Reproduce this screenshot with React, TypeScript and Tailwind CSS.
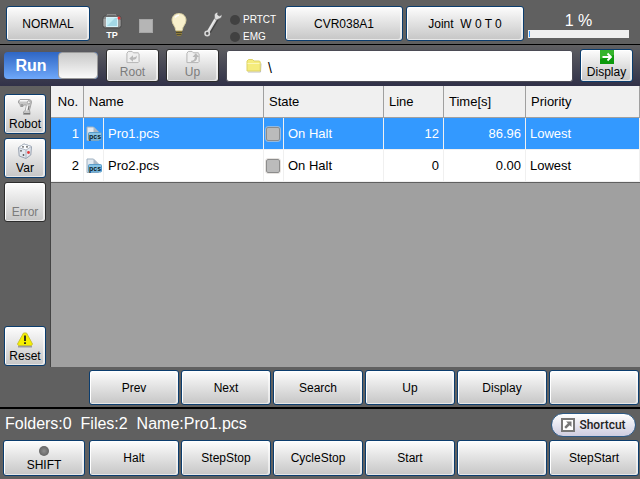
import type { ReactNode } from "react";

const font = "font-['Liberation_Sans',Arial,sans-serif]";

const face =
    "border rounded-[3px] bg-linear-to-b from-[#fdfdfd] to-[#c6c6c6] text-xs shadow-[inset_1px_1px_0_#ffffff,inset_-2px_-1px_0_#ffffff90]";

const programs = [
    { no: 1, name: "Pro1.pcs", state: "On Halt", line: "12", time: "86.96", priority: "Lowest", selected: true },
    { no: 2, name: "Pro2.pcs", state: "On Halt", line: "0", time: "0.00", priority: "Lowest", selected: false },
];

const fileKeys = ["Prev", "Next", "Search", "Up", "Display", ""];
const runKeys = ["Halt", "StepStop", "CycleStop", "Start", "", "StepStart"];

function Key({ children, className = "" }: { children?: ReactNode; className?: string }) {
    return (
        <button type="button" className={`${face} border-[#0b3d6e] text-black flex items-center justify-center ${className}`}>
            {children}
        </button>
    );
}

function IconKey({ icon, label, className = "", disabled = false }: { icon?: ReactNode; label: string; className?: string; disabled?: boolean }) {
    return (
        <button
            type="button"
            disabled={disabled}
            className={`${face} flex flex-col items-center justify-end gap-px leading-[14px] pb-[2px] ${disabled ? "border-[#2c2c2c] text-[#7c7c7c]" : "border-[#0b3d6e] text-black"} ${className}`}
        >
            {icon}
            <span>{label}</span>
        </button>
    );
}

function PendantIcon() {
    return (
        <svg width="20" height="16" viewBox="0 0 20 16">
            <path d="M5 2.5V1h9v1.5" fill="none" stroke="#b9b9b9" />
            <rect x="1" y="2" width="18" height="12" rx="2" fill="#8a8a8a" stroke="#4a4a4a" />
            <rect x="1.5" y="5" width="2.5" height="7" fill="#a5a5a5" />
            <rect x="16" y="6" width="2.5" height="6" fill="#999" />
            <rect x="4.5" y="3.5" width="11" height="9" fill="#a3d8e6" stroke="#d7f3fa" />
            <path d="M5 12V4h8z" fill="#c3edf5" />
            <circle cx="17" cy="4" r="1.5" fill="#e83030" />
        </svg>
    );
}

function BulbIcon() {
    return (
        <svg width="18" height="26" viewBox="0 0 18 26">
            <path d="M9 1.5c4.300 0 7 2.900 7 6.700 0 4.200-3.300 5.600-3.800 10.300H5.800C5.300 13.800 2 12.400 2 8.200 2 4.400 4.700 1.500 9 1.500z" fill="#f8f0cc" stroke="#d9cfa2" />
            <path d="M5 5.500c1-1.600 2.500-2.300 4-2.300" fill="none" stroke="#fff" strokeWidth="1.500" />
            <path d="M6 19h6v3.500L10.500 24h-3L6 22.500z" fill="#8f7d3c" />
            <path d="M6 20.500h6M6.500 22.500h5" stroke="#4f4a33" />
        </svg>
    );
}

function WrenchIcon() {
    return (
        <svg width="20" height="28" viewBox="0 0 20 28">
            <path d="M6 22.500L14 9" stroke="#444" strokeWidth="3.500" />
            <path d="M5 22L13 8.500" stroke="#d6d6d6" strokeWidth="2.800" />
            <path d="M5.500 20.500L12.500 8.500" stroke="#f3f3f3" />
            <circle cx="4.200" cy="23.500" r="2.200" fill="#555" stroke="#d6d6d6" strokeWidth="1.600" />
            <path d="M14.800 2.200c-2.600.3-4 2.300-3.300 4.300.3 1.200-.2 2-.2 2l2.600 1.500s.6-.9 1.700-1.100c2.200-.3 3.600-2 3.300-4.400L16.600 6l-2-1.100z" fill="#dedede" stroke="#555" strokeWidth=".5" />
        </svg>
    );
}

function FolderArrowIcon({ up = false }: { up?: boolean }) {
    return (
        <svg width="16" height="15" viewBox="0 0 16 15">
            <path d="M1.500 13.500V3.500L3 1.500h4L8.500 3h5l1 1v8.500l-1 1h-12z" fill="#efefef" stroke="#b0b0b0" />
            {up ? (
                <path d="M6 11.500c3 0 4-1.500 4-4H7.500l3.500-4 3.500 4h-2c0 3.500-2 5.500-6.500 5.500z" fill="#b8b8b8" />
            ) : (
                <path d="M4 9l4-3.500V8c2 0 3-.5 4-2 .5 3-1 4.500-4 4.500v2z" fill="#b8b8b8" />
            )}
        </svg>
    );
}

function FolderIcon() {
    return (
        <svg width="16" height="14" viewBox="0 0 16 14">
            <path d="M2 13h12.500l.5-8.500" fill="none" stroke="#bdbdbd" />
            <path d="M1 12V2l1.500-1.500h4L8 2h5.500l.7 1v9z" fill="#f5ec7c" stroke="#ddd267" />
            <path d="M1.500 4.500h12" stroke="#fbf7b8" />
        </svg>
    );
}

function GoIcon() {
    return (
        <svg width="14" height="14" viewBox="0 0 14 14">
            <rect width="14" height="14" fill="#0c9a0c" />
            <path d="M0 0h14v5L0 9z" fill="#35b42c" />
            <path d="M2.500 7h8M7.500 3.500L11 7l-3.500 3.500" fill="none" stroke="#fff" strokeWidth="1.800" />
        </svg>
    );
}

function RobotIcon() {
    return (
        <svg width="16" height="18" viewBox="0 0 16 18">
            <path d="M1.500 3l1.500-1.500h9.500c1.800.5 2.300 2 1.800 3.500L12.500 12l.5 3v1.500H6.500V14l2-2 1-5H6.500L6 8.500H3.500L3 6 1.500 5z" fill="#c6c6c6" stroke="#a2a2a2" />
            <path d="M3 2.800h8M10.500 7.500l-1 5" stroke="#f7f7f7" strokeWidth="1.500" />
            <circle cx="11.800" cy="4.300" r="1.500" fill="#f2f2f2" stroke="#a5a5a5" />
            <path d="M5 8.500V6M7 15.500h6M12 8l-.8 4" stroke="#777" />
        </svg>
    );
}

function DiceIcon() {
    return (
        <svg width="16" height="18" viewBox="0 0 16 18">
            <path d="M1.500 5.500L7 2l7.500 2.500-.7 8.500L9 16.500 2.200 14z" fill="#e2e7ee" stroke="#98a2b0" />
            <path d="M1.500 5.500L9 8l5.500-3.500L7 2z" fill="#fafcfe" stroke="#b4bcc8" />
            <path d="M9 8v8" stroke="#aab3bf" />
            <circle cx="6" cy="4.800" r=".9" fill="#555" />
            <circle cx="10" cy="4.800" r=".9" fill="#555" />
            <circle cx="4" cy="8.800" r=".9" fill="#555" />
            <circle cx="6.500" cy="13" r=".9" fill="#555" />
            <circle cx="11.500" cy="10.500" r="1.400" fill="#e53a3a" />
        </svg>
    );
}

function WarningIcon() {
    return (
        <svg width="18" height="16" viewBox="0 0 18 16">
            <path d="M2 14.500h14" stroke="#9c9c9c" strokeWidth="2" />
            <path d="M7.500 1h3l6 11-1 1.500h-13l-1-1.500z" fill="#f6f000" stroke="#c9c235" />
            <path d="M9 3.500v5.500M9 10.300v1.700" stroke="#222" strokeWidth="1.800" />
        </svg>
    );
}

function PcsIcon() {
    return (
        <svg width="16" height="16" viewBox="0 0 16 16" className="mx-auto">
            <path d="M1 14.500V1h6.500l5 5v8.500z" fill="#e3eaf1" stroke="#9fb0c0" />
            <path d="M7.500 1v5.500h5.500z" fill="#aab8c6" />
            <rect x="2.500" y="6.500" width="13" height="7.500" rx="1" fill="#86c3e6" stroke="#5a9cc8" />
            <text x="9" y="12.500" textAnchor="middle" fontSize="7" fontWeight="bold" fill="#081826">pcs</text>
        </svg>
    );
}

function ShortcutIcon() {
    return (
        <svg width="14" height="14" viewBox="0 0 14 14">
            <rect x="1" y="1" width="12" height="12" fill="#fff" stroke="#777" strokeWidth="2" />
            <path d="M5 3.500h5.500V9L8.700 7.200 5 10.800 3.300 9l3.600-3.700z" fill="#777" />
        </svg>
    );
}

export default function App() {
    return (
        <div className={`${font} flex min-h-screen flex-col bg-[#606060] text-black`}>
            <header className="flex h-[45px] items-start border-b border-black pl-[6px] pt-[6px]">
                <Key className="h-[35px] w-[84px]">NORMAL</Key>
                <div className="ml-3 mt-2 flex w-5 flex-col items-center">
                    <PendantIcon />
                    <span className="mt-px text-[9px] leading-[9px] font-bold text-white">TP</span>
                </div>
                <div className="ml-[17px] mt-[13px] size-[14px] border border-[#a6a6a6] bg-[#b5b5b5]" />
                <div className="ml-[17px] mt-[6px]">
                    <BulbIcon />
                </div>
                <div className="ml-[15px] mt-1">
                    <WrenchIcon />
                </div>
                <div className="ml-[7px] mt-[5px] text-[10px] leading-[17px] text-white">
                    <div className="flex items-center gap-[3px]">
                        <span className="size-[10px] rounded-full bg-[#414141]" />
                        PRTCT
                    </div>
                    <div className="flex items-center gap-[3px]">
                        <span className="size-[10px] rounded-full bg-[#414141]" />
                        EMG
                    </div>
                </div>
                <div className="ml-auto flex w-[239px] shrink-0 gap-[3px]">
                    <Key className="h-[35px] flex-1">CVR038A1</Key>
                    <Key className="h-[35px] flex-1 whitespace-pre">{"Joint  W 0 T 0"}</Key>
                </div>
                <div className="ml-1 mr-[11px] mt-[6px] w-[101px] shrink-0 text-center text-base leading-[18px] text-white">
                    1 %
                    <div className="h-2 bg-[#efefef] p-px">
                        <div className="h-full w-px bg-[#3399ff]" />
                    </div>
                </div>
            </header>

            <nav className="flex h-[41px] items-start bg-linear-to-b from-[#606062] to-[#313148] pl-1 pr-[7px] pt-1">
                <button type="button" className="mt-[3px] flex h-[27px] w-[94px] rounded-[4px] bg-linear-to-b from-[#2f66c4] to-[#6fa8fa] text-base font-bold text-white">
                    <span className="flex-1 self-center leading-[27px]">Run</span>
                    <span className="h-full w-10 rounded-[4px] border border-[#9a9a9a] bg-linear-to-b from-[#c9c9c9] to-[#fafafa]" />
                </button>
                <IconKey icon={<FolderArrowIcon />} label="Root" disabled className="ml-2 h-[33px] w-[53px]" />
                <IconKey icon={<FolderArrowIcon up />} label="Up" disabled className="ml-[7px] h-[33px] w-[53px]" />
                <div className="ml-[7px] mt-px flex h-8 flex-1 items-center gap-[6px] rounded-[3px] border border-[#4b4b55] bg-white pl-[19px] text-sm">
                    <FolderIcon />
                    <span className="pt-1">\</span>
                </div>
                <IconKey icon={<GoIcon />} label="Display" className="ml-[7px] h-[33px] w-[53px]" />
            </nav>

            <main className="flex flex-1">
                <aside className="flex w-[50px] flex-col gap-1 px-1 pt-2">
                    <IconKey icon={<RobotIcon />} label="Robot" className="h-10" />
                    <IconKey icon={<DiceIcon />} label="Var" className="h-10" />
                    <IconKey label="Error" disabled className="h-10" />
                    <IconKey icon={<WarningIcon />} label="Reset" className="mt-auto mb-px h-10" />
                </aside>
                <div className="flex-1 border-l border-[#444] bg-[#a0a0a0]">
                    <table className="w-full table-fixed border-separate border-spacing-0 border-b border-[#606060] text-left text-[13px]">
                        <colgroup>
                            <col className="w-[33px]" />
                            <col className="w-5" />
                            <col />
                            <col className="w-5" />
                            <col className="w-[100px]" />
                            <col className="w-[60px]" />
                            <col className="w-[82px]" />
                            <col className="w-[114px]" />
                        </colgroup>
                        <thead className="bg-[#f0f0f0]">
                            <tr className="h-8 *:border-r *:border-b *:border-[#a0a0a0] *:font-normal *:px-[5px] *:py-0">
                                <th className="text-right">No.</th>
                                <th colSpan={2}>Name</th>
                                <th colSpan={2}>State</th>
                                <th>Line</th>
                                <th>Time[s]</th>
                                <th>Priority</th>
                            </tr>
                        </thead>
                        <tbody>
                            {programs.map((program) => (
                                <tr
                                    key={program.no}
                                    className={`h-8 *:border-r *:border-b *:border-[#f0f0f0] *:py-0 ${program.selected ? "bg-[#3399ff] text-white" : "bg-white"}`}
                                >
                                    <td className="px-1 text-right">{program.no}</td>
                                    <td className="px-0">
                                        <PcsIcon />
                                    </td>
                                    <td className="px-1">{program.name}</td>
                                    <td className="px-0">
                                        <div className="mx-auto size-[14px] rounded-[2px] border border-[#8c8c8c] bg-[#bbb] outline outline-[#d5d0cc]/60" />
                                    </td>
                                    <td className="px-1">{program.state}</td>
                                    <td className="px-1 text-right">{program.line}</td>
                                    <td className="px-1 text-right">{program.time}</td>
                                    <td className="px-1">{program.priority}</td>
                                </tr>
                            ))}
                        </tbody>
                    </table>
                </div>
            </main>

            <div className="flex h-[42px] gap-[2px] border-b-2 border-black pl-[89px] pr-px pt-[3px]">
                {fileKeys.map((label, i) => (
                    <Key key={i} className="h-[35px] flex-1">{label}</Key>
                ))}
            </div>

            <div className="flex h-[31px] items-center justify-between pl-[5px] pr-1 text-base text-white">
                <span className="pb-[2px] whitespace-pre">{"Folders:0  Files:2  Name:Pro1.pcs"}</span>
                <button type="button" className="flex h-6 w-[85px] items-center justify-center gap-1 rounded-full border border-[#2d5a86] bg-linear-to-b from-white to-[#cfcde0] font-['Roboto',sans-serif] text-xs font-medium text-[#222]">
                    <ShortcutIcon />
                    Shortcut
                </button>
            </div>

            <footer className="flex h-[39px] gap-[2px] pl-[3px] pr-px">
                <Key className="mr-[2px] h-9 w-[82px] flex-col">
                    <span className="mt-1 size-[10px] rounded-full bg-radial from-[#8f8f8f] to-[#555]" />
                    <span className="leading-[18px]">SHIFT</span>
                </Key>
                {runKeys.map((label, i) => (
                    <Key key={i} className="h-9 flex-1">{label}</Key>
                ))}
            </footer>
        </div>
    );
}
